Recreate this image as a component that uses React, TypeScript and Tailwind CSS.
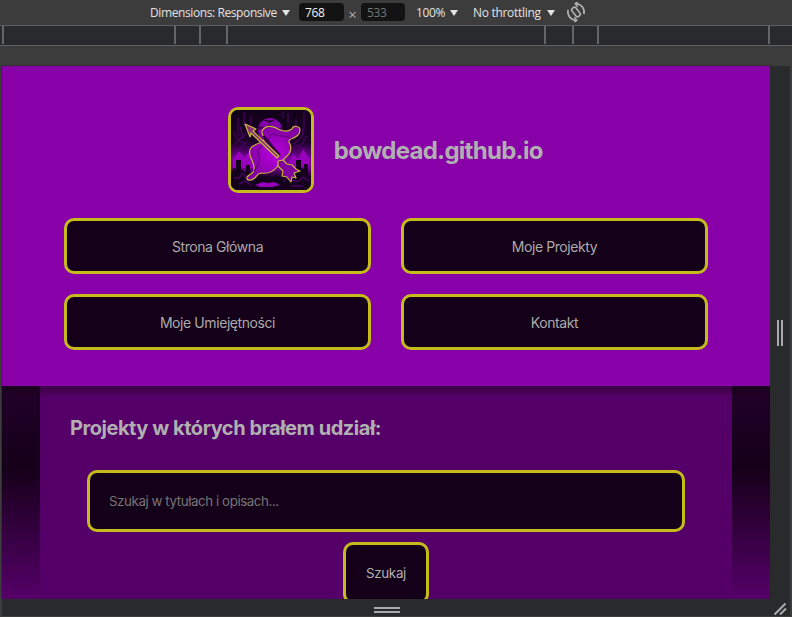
import React from "react";

const ticks = [2, 174, 199, 226, 544, 572, 597, 768];

function Caret() {
  return (
    <svg width="8" height="6" viewBox="0 0 8 6" className="shrink-0">
      <path d="M0 0h8L4 6z" fill="#e3e3e3" />
    </svg>
  );
}

function RotateIcon() {
  return (
    <svg width="20" height="20" viewBox="0 0 20 20" fill="none" stroke="#b8b8b8" className="shrink-0">
      <g transform="rotate(-38 10 10)">
        <rect x="7.500" y="5" width="5" height="10" rx="1.500" strokeWidth="1.500" />
        <path d="M5 3.500C.8 7 .8 13 5 16.500M15 3.500c4.200 3.500 4.200 9.500 0 13" strokeWidth="1.500" />
        <path d="M5.500 13v4H2M14.500 7V3H18" strokeWidth="1.400" />
      </g>
    </svg>
  );
}

function DeviceToolbar() {
  return (
    <div className="flex h-[25px] shrink-0 items-center pl-[150px] pb-px font-['Open_Sans','Noto_Sans',sans-serif] text-[12px] text-[#e3e3e3]">
      <span className="w-[128px] whitespace-nowrap pt-0.5 tracking-[-0.4px]">Dimensions: Responsive</span>
      <span className="ml-1 pt-0.5"><Caret /></span>
      <span className="ml-[9px] flex h-[18px] w-[45px] items-center rounded bg-[#131313] pl-1.5 pt-px tracking-[-0.3px] text-[#f2f2f2]">768</span>
      <span className="mt-1 w-[17px] text-center text-[15px] leading-4 text-[#aaa]">×</span>
      <span className="flex h-[18px] w-[44px] items-center rounded bg-[#131313] pl-1.5 pt-px tracking-[-0.3px] text-[#777]">533</span>
      <span className="ml-[11px] w-[31px] pt-0.5 tracking-[-0.4px]">100%</span>
      <span className="ml-[3px] pt-0.5"><Caret /></span>
      <span className="ml-[15px] w-[70px] whitespace-nowrap pt-0.5 tracking-[-0.3px]">No throttling</span>
      <span className="ml-1 pt-0.5"><Caret /></span>
      <span className="ml-[11px]"><RotateIcon /></span>
    </div>
  );
}

function Ruler() {
  return (
    <div className="h-[21px] shrink-0 border-y border-[#606060] bg-[#292a2b]">
      <svg width="792" height="19" viewBox="0 0 792 19">
        {ticks.map((x) => <rect key={x} x={x} width="2" height="18" fill="#656565" />)}
      </svg>
    </div>
  );
}

function Logo() {
  return (
    <div className="h-[86px] w-[86px] overflow-hidden rounded-[10px] border-[3px] border-[#c6bb1c] bg-[#160019]">
      <svg width="80" height="80" viewBox="0 0 80 80">
        <defs>
          <linearGradient id="sky" x1="0" y1="0" x2="0" y2="1">
            <stop offset="0" stopColor="#12001a" />
            <stop offset=".4" stopColor="#1c0028" />
            <stop offset=".62" stopColor="#7d00a0" />
            <stop offset=".74" stopColor="#6a0088" />
            <stop offset=".84" stopColor="#160020" />
          </linearGradient>
          <radialGradient id="bow"><stop stopColor="#b800e0" /><stop offset="1" stopColor="#8300a2" /></radialGradient>
        </defs>
        <path fill="url(#sky)" d="M0 0h80v80H0z" />
        <path d="M2 50l6-9 5 6 6-6 3 8v9H2zM58 53l4-9 5 5 5-10 6 9v9H58z" fill="#9800bc" />
        <circle cx="39" cy="20" r="12" fill="#8500aa" />
        <path d="M28 16l7 2 3-4 7 5 6-2-3 4-7-1-3 4-5-6-7 2zM31 10l8 3 5-3" fill="#3b004b" />
        <path d="M7 8v18m6-24v14m44-13v11m8-5v17m8-25v19M20 6v9m32-14v7M4 34l8-8-3-9m1 12 8-8M63 34l8-7 1-9M2 22l5 8 8 4M76 26l-6 9-8 2M3 41l9-5 4-5M77 39l-8-1-5 5" fill="none" stroke="#5b0079" strokeWidth=".9" />
        <path d="M0 66l2-8 3 1v-9h5v9l5 4v-8h4v6l6 9 4-3h6l5 4h5l6-4 4 3v-7l4-1v-5h4v4l2-1V50h5v8l3 1v-5h4v26H0z" fill="#14001c" />
        <path d="M3 68h5l4-5 4 7h6M8 74l6-3 6 4M52 72l6-5 4 4h6l4-4 6 4M60 76h12" fill="none" stroke="#65008a" strokeWidth="1" />
        <path d="M24 75l8-3 5 1 6-1 6 3-8 2H29z" fill="#9700bd" />
        <g stroke="#c8b53a" strokeLinejoin="round" strokeLinecap="round">
          <path d="M31 21C35 14 43 16 49 20c5 2 9 1 12-1 1-4 8-3 8 1 0 4-3 7-9 9-2 1-3 3-1 5 2 5 1 9-5 14-3 3-6 5-8 9-4 5-9 7-16 6-5 0-4 6-10 7-4 1-5-2-3-4 2-2 6-3 6-6 1-4-1-7-3-12-3-7-1-11 4-13 3-2 7-2 9-5 1-3-3-6-2-9z" fill="url(#bow)" strokeWidth="1.200" />
          <path d="M60 28c-6-3-12-1-17-4-3-1-4 3-7 8-3 4-8 4-9 8 0 4 2 8 1 12-1 4-3 6-5 9" fill="none" stroke="#650081" strokeWidth="1.200" />
          <path d="M33 27l15 18" fill="none" stroke="#31003e" strokeWidth="3" />
          <path d="M14 14l11 5-3 2 26 25-2 2-26-25-1 4z" fill="#8c2f78" strokeWidth="1.200" />
          <path d="M47 51l5-1 4 4 5 1 4 4 4 2-6 2 2 5-4-1-1 5-4-5-5-1 1-5-5-5z" fill="#8100a0" strokeWidth="1.200" />
        </g>
      </svg>
    </div>
  );
}

function NavButton({ children }: { children: React.ReactNode }) {
  return <button className="h-14 rounded-[10px] border-[3px] border-[#c6bb1c] bg-[#150019] text-[14px] tracking-[-0.42px] text-[#ababab]">{children}</button>;
}

function Website() {
  return (
    <div className="flex h-[533px] w-[768px] flex-col overflow-hidden bg-[#150019] font-[Inter,sans-serif] text-[#b0b0b0]">
      <header className="flex h-[320px] shrink-0 flex-col bg-[#8800a8] px-[62px] pt-[41px]">
        <div className="flex items-center justify-center gap-5 pr-[1.5px]">
          <Logo />
          <h1 className="pt-0.5 text-[24px] font-bold tracking-[-0.72px]">bowdead.github.io</h1>
        </div>
        <nav className="mt-[25px] grid grid-cols-2 gap-x-[30px] gap-y-5">
          <NavButton>Strona Główna</NavButton>
          <NavButton>Moje Projekty</NavButton>
          <NavButton>Moje Umiejętności</NavButton>
          <NavButton>Kontakt</NavButton>
        </nav>
      </header>
      <div className="h-[213px] shrink-0 bg-[linear-gradient(#17001c_0px,#200027_10px,#150019_82px,#550068_213px)] px-[38px]">
        <main className="flex h-full flex-col items-center bg-[linear-gradient(#3f004b_0px,#430050_5px,#550068_11px)]">
          <h2 className="w-full pl-[30px] pt-[27px] text-[20px] font-bold leading-[30px] tracking-[-0.46px]">Projekty w których brałem udział:</h2>
          <input className="mt-[27px] h-[62px] w-[598px] shrink-0 rounded-[10px] border-[3px] border-[#c6bb1c] bg-[#150019] px-[19px] pb-px text-[13.333px] tracking-[-0.43px] placeholder:text-[#757575]" placeholder="Szukaj w tytułach i opisach..." />
          <button className="mt-[10px] h-[62px] w-[86px] shrink-0 rounded-[10px] border-[3px] border-[#c6bb1c] bg-[#150019] pt-px text-[13.333px] tracking-[-0.28px]">Szukaj</button>
        </main>
      </div>
    </div>
  );
}

export default function App() {
  return (
    <div className="flex h-[617px] w-[792px] flex-col overflow-hidden bg-[#3c3c3c]">
      <DeviceToolbar />
      <Ruler />
      <div className="flex h-5 shrink-0 items-end pl-px"><div className="h-px w-[770px] bg-[#303030]" /></div>
      <div className="flex h-[533px] shrink-0">
        <div className="w-0.5 border-r border-[#303030]" />
        <Website />
        <div className="flex w-5 items-center justify-center gap-0.5 bg-[#292a2b]">
          <div className="h-[26px] w-0.5 bg-[#aaa]" /><div className="h-[26px] w-0.5 bg-[#aaa]" />
        </div>
      </div>
      <div className="flex h-[17px] shrink-0 pl-0.5">
        <div className="flex w-[768px] flex-col items-center justify-center gap-0.5 bg-[#292a2b] pl-0.5 pt-[5px]">
          <div className="h-0.5 w-[26px] bg-[#aaa]" /><div className="h-0.5 w-[26px] bg-[#aaa]" />
        </div>
        <div className="h-[17px] w-5 bg-[#292a2b]">
          <svg width="20" height="17" fill="none" stroke="#aaa" strokeWidth="2"><path d="M4.500 15.500l11-11M10 15.500l6-6" /></svg>
        </div>
      </div>
    </div>
  );
}
